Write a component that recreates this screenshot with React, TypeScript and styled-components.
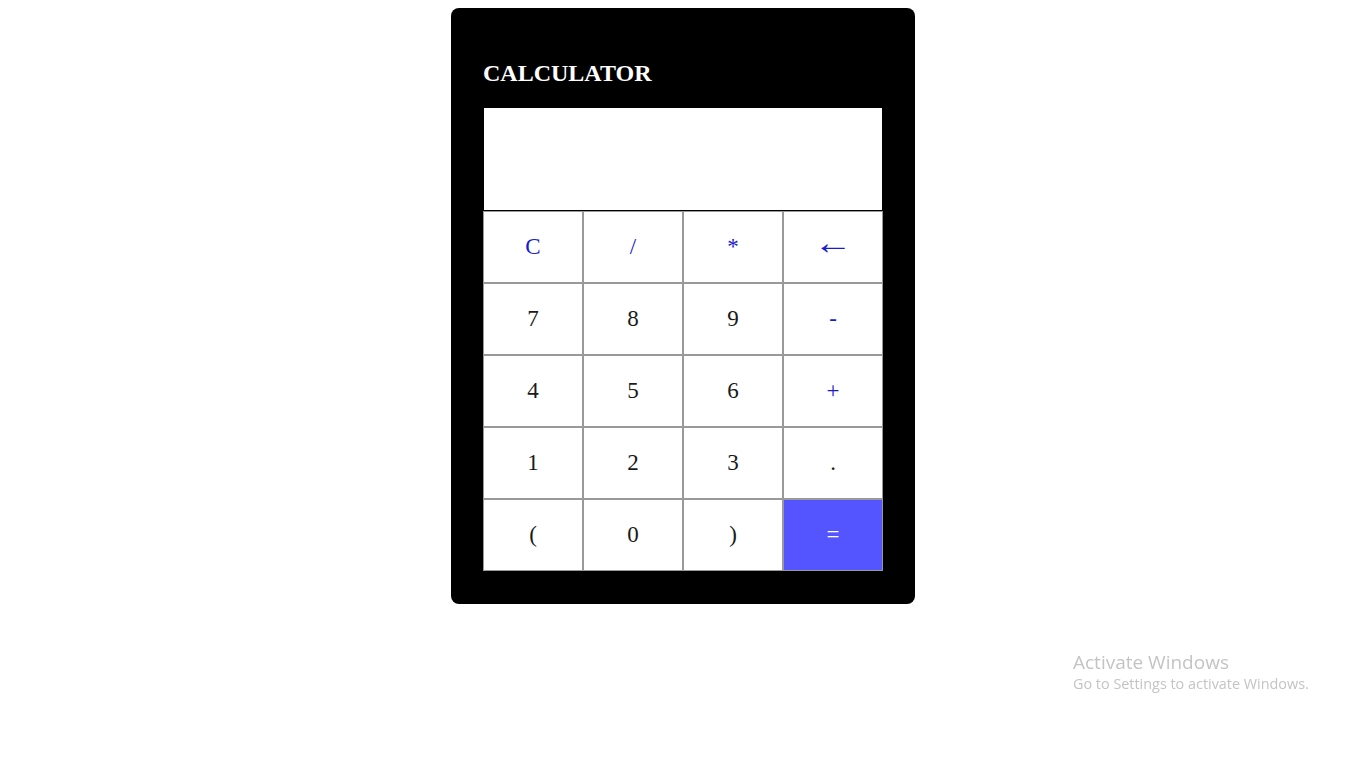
import React, { useState } from "react";
import styled, { createGlobalStyle } from "styled-components";

const GlobalStyle = createGlobalStyle`
  body {
    margin: 8px;
    background: #ffffff;
    font-family: "Liberation Serif", "Times New Roman", serif;
  }
`;

const Card = styled.div`
  width: 400px;
  margin: 0 auto;
  padding: 32px 32px 33px;
  background: #000000;
  border-radius: 8px;
`;

const Title = styled.h2`
  margin: 20px 0 21px;
  color: #ffffff;
  font-size: 24px;
  font-weight: bold;
  line-height: 27px;
`;

const Display = styled.div`
  height: 103px;
  margin: 0 1px;
  background: #ffffff;
  border-bottom: 1px solid #000000;
  box-sizing: border-box;
  padding: 0 12px;
  display: flex;
  align-items: center;
  justify-content: flex-end;
  font-size: 32px;
  color: #000;
  overflow: hidden;
`;

const Keys = styled.div`
  display: grid;
  grid-template-columns: repeat(4, 100px);
  grid-auto-rows: 72px;
`;

type Kind = "num" | "op" | "eq";

const Key = styled.button<{ $kind: Kind }>`
  border: 1px solid #999999;
  margin: 0;
  padding: 0;
  background: ${(p) => (p.$kind === "eq" ? "#5555ff" : "#ffffff")};
  color: ${(p) =>
    p.$kind === "eq" ? "#ffffff" : p.$kind === "op" ? "#1a1ad0" : "#1a1a1a"};
  font-family: "Liberation Serif", "Times New Roman", serif;
  font-size: 23px;
  cursor: pointer;
`;

const Arrow = styled.span`
  display: inline-block;
  font-size: 34px;
  line-height: 1;
  transform: translateY(-4px) scaleX(1.15);
`;

const Watermark = styled.div`
  position: fixed;
  left: 1073px;
  top: 650px;
  color: #c4c4c4;
  font-family: "Open Sans", "Noto Sans", sans-serif;
  pointer-events: none;
`;

const WmTitle = styled.div`
  font-size: 19px;
  line-height: 24px;
`;

const WmSub = styled.div`
  font-size: 14.4px;
  line-height: 20px;
`;

const keys: { label: string; kind: Kind }[] = [
  { label: "C", kind: "op" },
  { label: "/", kind: "op" },
  { label: "*", kind: "op" },
  { label: "←", kind: "op" },
  { label: "7", kind: "num" },
  { label: "8", kind: "num" },
  { label: "9", kind: "num" },
  { label: "-", kind: "op" },
  { label: "4", kind: "num" },
  { label: "5", kind: "num" },
  { label: "6", kind: "num" },
  { label: "+", kind: "op" },
  { label: "1", kind: "num" },
  { label: "2", kind: "num" },
  { label: "3", kind: "num" },
  { label: ".", kind: "num" },
  { label: "(", kind: "num" },
  { label: "0", kind: "num" },
  { label: ")", kind: "num" },
  { label: "=", kind: "eq" },
];

export default function App() {
  const [value, setValue] = useState("");

  const press = (k: string) => {
    if (k === "C") return setValue("");
    if (k === "←") return setValue((v) => v.slice(0, -1));
    if (k === "=") {
      try {
        // eslint-disable-next-line no-new-func
        setValue(String(Function(`return (${value})`)()));
      } catch {
        setValue("Error");
      }
      return;
    }
    setValue((v) => v + k);
  };

  return (
    <>
      <GlobalStyle />
      <Card>
        <Title>CALCULATOR</Title>
        <Display>{value}</Display>
        <Keys>
          {keys.map((k) => (
            <Key key={k.label} $kind={k.kind} onClick={() => press(k.label)}>
              {k.label === "←" ? <Arrow>←</Arrow> : k.label}
            </Key>
          ))}
        </Keys>
      </Card>
      <Watermark>
        <WmTitle>Activate Windows</WmTitle>
        <WmSub>Go to Settings to activate Windows.</WmSub>
      </Watermark>
    </>
  );
}
